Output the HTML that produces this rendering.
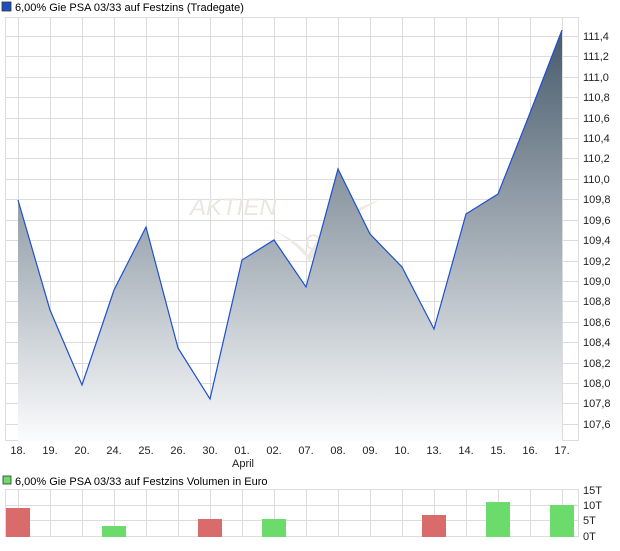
<!DOCTYPE html><html><head><style>body{margin:0;background:#fff;font-family:"Liberation Sans",sans-serif;}</style></head><body>
<svg width="620" height="546" xmlns="http://www.w3.org/2000/svg" font-family="Liberation Sans, sans-serif" font-size="11">
<defs><linearGradient id="g" x1="0" y1="30" x2="0" y2="441" gradientUnits="userSpaceOnUse"><stop offset="0" stop-color="#475a6b"/><stop offset="1" stop-color="#fbfcfd"/></linearGradient></defs>
<rect x="2" y="2" width="9" height="9" fill="#1f4fbf" stroke="#333" stroke-width="0.8"/>
<text x="15" y="11">6,00% Gie PSA 03/33 auf Festzins (Tradegate)</text>
<g stroke="#dcdcdc" stroke-width="1">
<rect x="5.5" y="17.5" width="573" height="423" fill="none"/>
<path d="M18.5 17v424M50.5 17v424M82.5 17v424M114.5 17v424M146.5 17v424M178.5 17v424M210.5 17v424M242.5 17v424M274.5 17v424M306.5 17v424M338.5 17v424M370.5 17v424M402.5 17v424M434.5 17v424M466.5 17v424M498.5 17v424M530.5 17v424M562.5 17v424"/>
<path d="M5 36.5h573M5 56.5h573M5 77.5h573M5 97.5h573M5 118.5h573M5 138.5h573M5 158.5h573M5 179.5h573M5 199.5h573M5 220.5h573M5 240.5h573M5 261.5h573M5 281.5h573M5 301.5h573M5 322.5h573M5 342.5h573M5 363.5h573M5 383.5h573M5 403.5h573M5 424.5h573"/>
</g>
<text x="190" y="215" font-size="24" font-style="italic" fill="#ebe6e0">AKTIEN</text>
<path d="M255 222 Q300 240 308 255 Q330 215 380 200 Q330 225 310 262 Q290 235 255 222Z" fill="#eee9e3"/>
<text x="305" y="250" font-size="22" fill="#ebe6e0">C</text>
<path d="M18 441 L18 200 L50 310 L82 385 L114 290 L146 227 L178 348 L210 399 L242 260 L274 240 L306 287 L338 169 L370 234 L402 267 L434 329 L466 214 L498 194 L530 113 L562 30 L562 441Z" fill="url(#g)"/>
<path d="M18 200 L50 310 L82 385 L114 290 L146 227 L178 348 L210 399 L242 260 L274 240 L306 287 L338 169 L370 234 L402 267 L434 329 L466 214 L498 194 L530 113 L562 30" fill="none" stroke="#1f4fd0" stroke-width="1.2"/>
<g fill="#222" font-size="11">
<text x="583" y="40">111,4</text><text x="583" y="60">111,2</text><text x="583" y="81">111,0</text><text x="583" y="101">110,8</text><text x="583" y="122">110,6</text><text x="583" y="142">110,4</text><text x="583" y="162">110,2</text><text x="583" y="183">110,0</text><text x="583" y="203">109,8</text><text x="583" y="224">109,6</text><text x="583" y="244">109,4</text><text x="583" y="265">109,2</text><text x="583" y="285">109,0</text><text x="583" y="305">108,8</text><text x="583" y="326">108,6</text><text x="583" y="346">108,4</text><text x="583" y="367">108,2</text><text x="583" y="387">108,0</text><text x="583" y="407">107,8</text><text x="583" y="428">107,6</text>
</g>
<g fill="#222" font-size="11" text-anchor="middle">
<text x="18" y="454">18.</text><text x="50" y="454">19.</text><text x="82" y="454">20.</text><text x="114" y="454">24.</text><text x="146" y="454">25.</text><text x="178" y="454">26.</text><text x="210" y="454">30.</text><text x="242" y="454">01.</text><text x="274" y="454">02.</text><text x="306" y="454">07.</text><text x="338" y="454">08.</text><text x="370" y="454">09.</text><text x="402" y="454">10.</text><text x="434" y="454">13.</text><text x="466" y="454">14.</text><text x="498" y="454">15.</text><text x="530" y="454">16.</text><text x="562" y="454">17.</text>
<text x="243" y="467">April</text>
</g>
<rect x="3" y="476" width="8" height="8" fill="#6bdb6b" stroke="#333" stroke-width="0.8"/>
<text x="15" y="485">6,00% Gie PSA 03/33 auf Festzins Volumen in Euro</text>
<g stroke="#dcdcdc" stroke-width="1">
<rect x="5.5" y="489.5" width="573" height="47" fill="none"/>
<path d="M18.5 489v48M50.5 489v48M82.5 489v48M114.5 489v48M146.5 489v48M178.5 489v48M210.5 489v48M242.5 489v48M274.5 489v48M306.5 489v48M338.5 489v48M370.5 489v48M402.5 489v48M434.5 489v48M466.5 489v48M498.5 489v48M530.5 489v48M562.5 489v48M5 505.5h573M5 520.5h573"/>
</g>
<rect x="6" y="508" width="24" height="29" fill="#d96b6b"/>
<rect x="102" y="526" width="24" height="11" fill="#6bdb6b"/>
<rect x="198" y="519" width="24" height="18" fill="#d96b6b"/>
<rect x="262" y="519" width="24" height="18" fill="#6bdb6b"/>
<rect x="422" y="515" width="24" height="22" fill="#d96b6b"/>
<rect x="486" y="502" width="24" height="35" fill="#6bdb6b"/>
<rect x="550" y="505" width="24" height="32" fill="#6bdb6b"/>
<g fill="#222" font-size="11"><text x="583" y="494">15T</text><text x="583" y="509">10T</text><text x="583" y="524">5T</text><text x="583" y="540">0T</text></g>
</svg>
</body></html>
